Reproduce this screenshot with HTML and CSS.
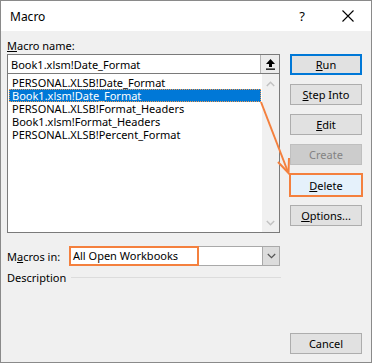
FILE: index.html
```html
<!DOCTYPE html>
<html>
<head>
<meta charset="utf-8">
<link rel="stylesheet" href="styles.css">
</head>
<body>
<div class="dialog">
  <div class="titlebar">
    <span class="title">Macro</span>
    <span class="help">?</span>
    <svg class="close" width="12" height="12" viewBox="0 0 12 12"><path d="M0.5 0.5 L11.5 11.5 M11.5 0.5 L0.5 11.5" stroke="#000" stroke-width="1.1" fill="none"/></svg>
  </div>
  <div class="main">
    <div class="left">
      <div class="label"><u>M</u>acro name:</div>
      <div class="namebox">
        <span class="nametext">Book1.xlsm!Date_Format</span>
        <span class="upbtn">
          <svg width="11" height="12" viewBox="0 0 11 12"><path d="M5.5 1 L10 6 L7 6 L7 9 L4 9 L4 6 L1 6 Z" fill="#000"/><rect x="1" y="10.5" width="9" height="1.3" fill="#000"/></svg>
        </span>
      </div>
      <div class="listbox">
        <div class="items">
          <div class="item">PERSONAL.XLSB!Date_Format</div>
          <div class="item selected">Book1.xlsm!Date_Format</div>
          <div class="item">PERSONAL.XLSB!Format_Headers</div>
          <div class="item">Book1.xlsm!Format_Headers</div>
          <div class="item">PERSONAL.XLSB!Percent_Format</div>
        </div>
        <div class="scrollbar">
          <svg width="9" height="6" viewBox="0 0 9 6"><path d="M0.8 5 L4.5 1.3 L8.2 5" stroke="#c2c2c2" stroke-width="1.5" fill="none"/></svg>
          <svg width="9" height="6" viewBox="0 0 9 6"><path d="M0.8 1 L4.5 4.7 L8.2 1" stroke="#c2c2c2" stroke-width="1.5" fill="none"/></svg>
        </div>
      </div>
      <div class="macrosin">
        <span class="label2">M<u>a</u>cros in:</span>
        <div class="combo">
          <span class="combotext">All Open Workbooks</span>
          <span class="dropbtn">
            <svg width="9" height="6" viewBox="0 0 9 6"><path d="M0.8 1 L4.5 4.7 L8.2 1" stroke="#555" stroke-width="1.2" fill="none"/></svg>
          </span>
        </div>
      </div>
      <div class="desc">
        <span>Description</span>
        <span class="rule"></span>
      </div>
    </div>
    <div class="right">
      <div class="btn default"><u>R</u>un</div>
      <div class="btn"><u>S</u>tep Into</div>
      <div class="btn"><u>E</u>dit</div>
      <div class="btn disabled">Create</div>
      <div class="btn marked"><u>D</u>elete</div>
      <div class="btn"><u>O</u>ptions...</div>
      <div class="btn cancel">Cancel</div>
    </div>
  </div>
  <svg class="arrow" width="372" height="363" viewBox="0 0 372 363">
    <path d="M261 102 L288 172" stroke="#f4803e" stroke-width="2" fill="none"/>
    <path d="M278 162 L288.5 173 L289 158" stroke="#f4803e" stroke-width="2" fill="none"/>
  </svg>
</div>
</body>
</html>
```

FILE: styles.css
```css
html, body {
  margin: 0;
  padding: 0;
}
body {
  font-family: "Noto Sans", "Liberation Sans", sans-serif;
  font-size: 11px;
  color: #000;
}
.dialog {
  position: relative;
  width: 372px;
  height: 363px;
  box-sizing: border-box;
  border: 1px solid #8a8a8a;
  background: #f0f0f0;
  display: flex;
  flex-direction: column;
}
.titlebar {
  height: 30px;
  background: #fff;
  display: flex;
  align-items: center;
  flex-shrink: 0;
}
.title {
  font-size: 12px;
  padding-left: 9px;
  flex: 1;
}
.help {
  font-size: 13px;
  margin-right: 37px;
}
.close {
  margin-right: 17px;
}
.main {
  flex: 1;
  display: grid;
  grid-template-columns: 273px 72px;
  column-gap: 10px;
  padding: 7px 9px 8px 6px;
}
.left {
  display: flex;
  flex-direction: column;
}
.label {
  height: 16px;
  line-height: 15px;
}
.namebox {
  height: 19px;
  box-sizing: border-box;
  border: 1px solid #7a7a7a;
  border-bottom: none;
  background: #fff;
  display: flex;
  align-items: center;
}
.nametext {
  flex: 1;
  padding-left: 3px;
}
.upbtn {
  width: 19px;
  height: 18px;
  box-sizing: border-box;
  border-left: 1px solid #b5b5b5;
  background: #ececec;
  display: flex;
  align-items: center;
  justify-content: center;
}
.listbox {
  height: 160px;
  box-sizing: border-box;
  border: 1px solid #7a7a7a;
  background: #fff;
  display: flex;
}
.items {
  flex: 1;
  padding: 2px 0 0 1px;
}
.item {
  height: 13px;
  line-height: 13px;
  padding-left: 3px;
  white-space: nowrap;
}
.item.selected {
  background: #0078d7;
  color: #fff;
  outline: 1px dotted #f09a50;
  outline-offset: -1px;
  margin-right: 1px;
}
.scrollbar {
  width: 17px;
  background: #f0f0f0;
  display: flex;
  flex-direction: column;
  align-items: center;
  justify-content: space-between;
  padding: 7px 0 6px;
}
.macrosin {
  margin-top: 13px;
  display: flex;
  align-items: center;
  height: 20px;
}
.label2 {
  width: 62px;
}
.combo {
  flex: 1;
  height: 20px;
  box-sizing: border-box;
  background: #fff;
  border: 1px solid #a9a9a9;
  border-left: none;
  display: flex;
}
.combotext {
  width: 130px;
  box-sizing: border-box;
  border: 2px solid #f4803e;
  margin-top: -1px;
  height: 20px;
  padding-left: 2px;
  line-height: 16px;
}
.dropbtn {
  margin-left: auto;
  width: 17px;
  box-sizing: border-box;
  background: #dcdcdc;
  border-left: 1px solid #a9a9a9;
  display: flex;
  align-items: center;
  justify-content: center;
}
.desc {
  display: flex;
  align-items: center;
  margin-top: 4px;
  height: 14px;
}
.rule {
  flex: 1;
  height: 1px;
  background: #dcdcdc;
  margin-left: 5px;
  margin-right: -1px;
}
.right {
  display: flex;
  flex-direction: column;
  padding-top: 16px;
  gap: 9px;
}
.btn {
  height: 21px;
  box-sizing: border-box;
  border: 1px solid #adadad;
  background: #e1e1e1;
  display: flex;
  align-items: center;
  justify-content: center;
}
.btn.default {
  border: 2px solid #0078d7;
}
.btn.disabled {
  color: #838383;
  border-color: #bfbfbf;
  background: #cccccc;
}
.btn.marked {
  background: #e5f1fb;
  outline: 2px solid #f4803e;
  outline-offset: -1px;
  height: 22px;
}
.btn.cancel {
  margin-top: auto;
}
.arrow {
  position: absolute;
  left: -1px;
  top: -1px;
  pointer-events: none;
}
```
